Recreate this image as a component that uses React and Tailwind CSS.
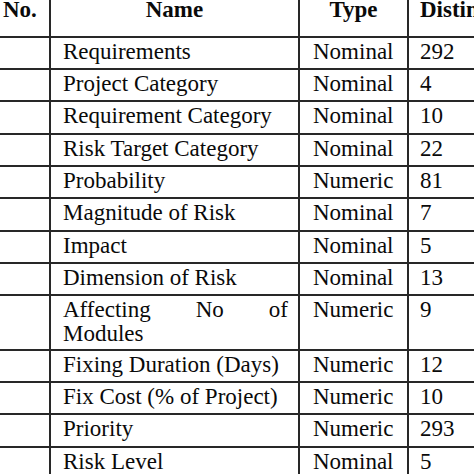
import React from "react";

const rows = [
  { name: "Requirements", type: "Nominal", val: "292", h: "h-[32px]" },
  { name: "Project Category", type: "Nominal", val: "4", h: "h-[32px]" },
  { name: "Requirement Category", type: "Nominal", val: "10", h: "h-[33px]" },
  { name: "Risk Target Category", type: "Nominal", val: "22", h: "h-[32px]" },
  { name: "Probability", type: "Numeric", val: "81", h: "h-[32px]" },
  { name: "Magnitude of Risk", type: "Nominal", val: "7", h: "h-[33px]" },
  { name: "Impact", type: "Nominal", val: "5", h: "h-[32px]" },
  { name: "Dimension of Risk", type: "Nominal", val: "13", h: "h-[32px]" },
  { name: "Affecting No of Modules", type: "Numeric", val: "9", h: "h-[55px]", justify: true },
  { name: "Fixing Duration (Days)", type: "Numeric", val: "12", h: "h-[32px]" },
  { name: "Fix Cost (% of Project)", type: "Numeric", val: "10", h: "h-[32px]" },
  { name: "Priority", type: "Numeric", val: "293", h: "h-[33px]" },
  { name: "Risk Level", type: "Nominal", val: "5", h: "h-[32px]" },
];

export default function App() {
  return (
    <div
      className="w-[474px] h-[474px] overflow-hidden bg-white text-[#0a0a0a] text-[23px] leading-[24px]"
      style={{ fontFamily: '"Liberation Serif", "Times New Roman", serif' }}
    >
      <div className="w-[700px] flex flex-col">
        {/* header */}
        <div className="flex h-[38px] border-b-2 border-[#282828] font-bold">
          <div className="w-[51px] shrink-0 border-r-2 border-[#282828] pl-[3px]">
            <div className="-mt-[2px] whitespace-nowrap">No.</div>
          </div>
          <div className="w-[249px] shrink-0 border-r-2 border-[#282828] text-center">
            <div className="-mt-[2px] whitespace-nowrap">Name</div>
          </div>
          <div className="w-[109px] shrink-0 border-r-2 border-[#282828] text-center">
            <div className="-mt-[2px] whitespace-nowrap">Type</div>
          </div>
          <div className="flex-1 pl-[11px]">
            <div className="-mt-[2px] whitespace-nowrap">Distinct Values</div>
          </div>
        </div>
        {rows.map((r, i) => (
          <div key={i} className={`flex ${r.h} border-b-2 border-[#282828]`}>
            <div className="w-[51px] shrink-0 border-r-2 border-[#282828]" />
            <div
              className={`w-[249px] shrink-0 border-r-2 border-[#282828] pl-[12px] pr-[10px] pt-[2px] ${
                r.justify ? "text-justify" : "whitespace-nowrap"
              }`}
            >
              {r.name}
            </div>
            <div className="w-[109px] shrink-0 border-r-2 border-[#282828] pl-[13px] pt-[2px] whitespace-nowrap">
              {r.type}
            </div>
            <div className="flex-1 pl-[11px] pt-[2px] whitespace-nowrap">{r.val}</div>
          </div>
        ))}
      </div>
    </div>
  );
}
